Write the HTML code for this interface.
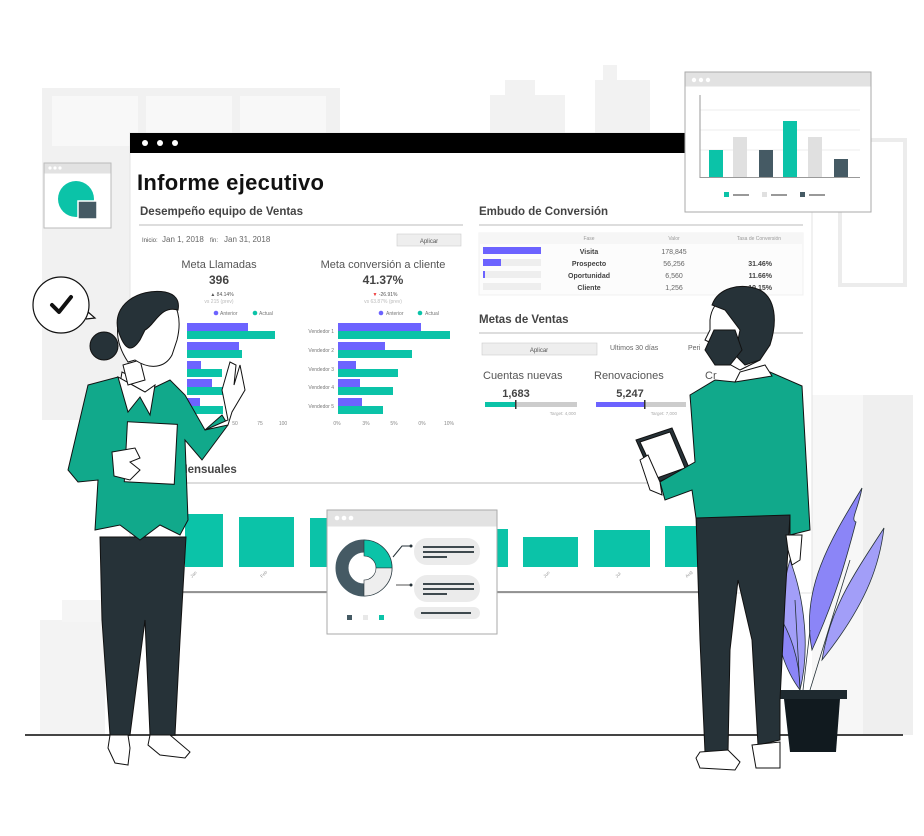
<!DOCTYPE html>
<html><head><meta charset="utf-8"><style>
html,body{margin:0;padding:0;background:#fff;width:924px;height:836px;overflow:hidden}
svg{display:block}
text{font-family:"Liberation Sans",sans-serif}
</style></head><body>
<svg width="924" height="836" viewBox="0 0 924 836" xmlns="http://www.w3.org/2000/svg">
<!-- background buildings -->
<rect x="42" y="88" width="298" height="332" fill="#f1f1f1"/>
<rect x="52" y="96" width="86" height="50" fill="#f8f8f8"/><rect x="146" y="96" width="86" height="50" fill="#f8f8f8"/><rect x="240" y="96" width="86" height="50" fill="#f8f8f8"/>
<rect x="490" y="95" width="75" height="40" fill="#f2f2f2"/><rect x="505" y="80" width="30" height="20" fill="#f2f2f2"/>
<rect x="595" y="80" width="55" height="55" fill="#f2f2f2"/><rect x="603" y="65" width="14" height="20" fill="#f2f2f2"/>
<rect x="840" y="140" width="65" height="145" fill="none" stroke="#ececec" stroke-width="4"/>
<rect x="812" y="395" width="51" height="340" fill="#f7f7f7"/>
<rect x="863" y="395" width="50" height="340" fill="#efefef"/>
<rect x="40" y="620" width="65" height="115" fill="#f3f3f3"/><rect x="62" y="600" width="50" height="22" fill="#f5f5f5"/>
<!-- main window -->
<rect x="130" y="133" width="682" height="460" fill="#fff" stroke="#e3e3e3"/>
<rect x="130" y="133" width="682" height="20" fill="#000"/>
<circle cx="145" cy="143" r="3" fill="#fff"/><circle cx="160" cy="143" r="3" fill="#fff"/><circle cx="175" cy="143" r="3" fill="#fff"/>
<text x="137" y="190" font-size="22" font-weight="bold" fill="#111" letter-spacing=".3">Informe ejecutivo</text>
<text x="140" y="215" font-size="11.5" font-weight="bold" fill="#444">Desempeño equipo de Ventas</text>
<line x1="139" y1="225" x2="463" y2="225" stroke="#bbb"/>
<text x="142" y="242" font-size="6" fill="#555">Inicio:</text><text x="162" y="242" font-size="8" fill="#666">Jan 1, 2018</text>
<text x="210" y="242" font-size="6" fill="#555">fin:</text><text x="224" y="242" font-size="8" fill="#666">Jan 31, 2018</text>
<rect x="397" y="234" width="64" height="12" fill="#eee" stroke="#ccc" stroke-width=".6"/><text x="429" y="243" font-size="6" fill="#555" text-anchor="middle">Aplicar</text>
<text x="219" y="268" font-size="11" fill="#555" text-anchor="middle">Meta Llamadas</text>
<text x="219" y="284" font-size="12" font-weight="bold" fill="#444" text-anchor="middle">396</text>
<text x="222" y="296" font-size="5" fill="#555" text-anchor="middle">▲ 84.14%</text><text x="219" y="303" font-size="5" fill="#bbb" text-anchor="middle">vs 215 (prev)</text>
<text x="383" y="268" font-size="11" fill="#555" text-anchor="middle">Meta conversión a cliente</text>
<text x="383" y="284" font-size="12" font-weight="bold" fill="#444" text-anchor="middle">41.37%</text>
<text x="385" y="296" font-size="5" fill="#555" text-anchor="middle"><tspan fill="#e33">▼</tspan> -26.91%</text><text x="383" y="303" font-size="5" fill="#bbb" text-anchor="middle">vs 63.87% (prev)</text>
<circle cx="216" cy="313" r="2.3" fill="#6c63ff"/><text x="220" y="315" font-size="5" fill="#777">Anterior</text>
<circle cx="255" cy="313" r="2.3" fill="#0bc3a8"/><text x="259" y="315" font-size="5" fill="#777">Actual</text>
<circle cx="381" cy="313" r="2.3" fill="#6c63ff"/><text x="386" y="315" font-size="5" fill="#777">Anterior</text>
<circle cx="420" cy="313" r="2.3" fill="#0bc3a8"/><text x="425" y="315" font-size="5" fill="#777">Actual</text>
<g fill="#6c63ff"><rect x="187" y="323" width="61" height="8"/><rect x="187" y="342" width="52" height="8"/><rect x="187" y="361" width="14" height="8"/><rect x="187" y="379" width="25" height="8"/><rect x="187" y="398" width="13" height="8"/>
<rect x="338" y="323" width="83" height="8"/><rect x="338" y="342" width="47" height="8"/><rect x="338" y="361" width="18" height="8"/><rect x="338" y="379" width="22" height="8"/><rect x="338" y="398" width="24" height="8"/></g>
<g fill="#0bc3a8"><rect x="187" y="331" width="88" height="8"/><rect x="187" y="350" width="55" height="8"/><rect x="187" y="369" width="35" height="8"/><rect x="187" y="387" width="40" height="8"/><rect x="187" y="406" width="36" height="8"/>
<rect x="338" y="331" width="112" height="8"/><rect x="338" y="350" width="74" height="8"/><rect x="338" y="369" width="60" height="8"/><rect x="338" y="387" width="55" height="8"/><rect x="338" y="406" width="45" height="8"/></g>
<g font-size="5" fill="#777" text-anchor="end"><text x="334" y="333">Vendedor 1</text><text x="334" y="352">Vendedor 2</text><text x="334" y="371">Vendedor 3</text><text x="334" y="389">Vendedor 4</text><text x="334" y="408">Vendedor 5</text></g>
<g font-size="5" fill="#888" text-anchor="middle"><text x="235" y="425">50</text><text x="260" y="425">75</text><text x="283" y="425">100</text>
<text x="337" y="425">0%</text><text x="366" y="425">3%</text><text x="394" y="425">5%</text><text x="422" y="425">0%</text><text x="449" y="425">10%</text></g>
<!-- right panel -->
<text x="479" y="215" font-size="11.5" font-weight="bold" fill="#444">Embudo de Conversión</text>
<line x1="479" y1="225" x2="803" y2="225" stroke="#bbb"/>
<rect x="479" y="233" width="324" height="62" fill="#fcfcfc" stroke="#f0f0f0"/>
<rect x="479" y="233" width="324" height="11" fill="#f6f6f6"/>
<g font-size="5" fill="#999" text-anchor="middle"><text x="589" y="240">Fase</text><text x="674" y="240">Valor</text><text x="759" y="240">Tasa de Conversión</text></g>
<g fill="#eee"><rect x="483" y="247" width="58" height="7"/><rect x="483" y="259" width="58" height="7"/><rect x="483" y="271" width="58" height="7"/><rect x="483" y="283" width="58" height="7"/></g>
<rect x="483" y="247" width="58" height="7" fill="#6c63ff"/><rect x="483" y="259" width="18" height="7" fill="#6c63ff"/><rect x="483" y="271" width="2" height="7" fill="#6c63ff"/>
<g font-size="7" fill="#444" font-weight="bold" text-anchor="middle"><text x="589" y="254">Visita</text><text x="589" y="266">Prospecto</text><text x="589" y="278">Oportunidad</text><text x="589" y="290">Cliente</text></g>
<g font-size="7" fill="#666" text-anchor="middle"><text x="674" y="254">178,845</text><text x="674" y="266">56,256</text><text x="674" y="278">6,560</text><text x="674" y="290">1,256</text></g>
<g font-size="7" fill="#444" font-weight="bold" text-anchor="end"><text x="772" y="266">31.46%</text><text x="772" y="278">11.66%</text><text x="772" y="290">19.15%</text></g>
<text x="479" y="323" font-size="11.5" font-weight="bold" fill="#444">Metas de Ventas</text>
<line x1="479" y1="333" x2="803" y2="333" stroke="#bbb"/>
<rect x="482" y="343" width="115" height="12" fill="#eee" stroke="#ccc" stroke-width=".6"/><text x="539" y="352" font-size="6" fill="#555" text-anchor="middle">Aplicar</text>
<text x="610" y="350" font-size="7" fill="#666">Ultimos 30 días</text><text x="688" y="350" font-size="7" fill="#666">Peri</text>
<text x="483" y="379" font-size="11" fill="#555">Cuentas nuevas</text><text x="594" y="379" font-size="11" fill="#555">Renovaciones</text><text x="705" y="379" font-size="11" fill="#555">Cr</text>
<text x="516" y="397" font-size="11" font-weight="bold" fill="#444" text-anchor="middle">1,683</text><text x="630" y="397" font-size="11" font-weight="bold" fill="#444" text-anchor="middle">5,247</text>
<rect x="485" y="402" width="92" height="5" fill="#ccc"/><rect x="485" y="402" width="31" height="5" fill="#0bc3a8"/><rect x="515" y="400" width="1.5" height="9" fill="#333"/>
<rect x="596" y="402" width="90" height="5" fill="#ccc"/><rect x="596" y="402" width="48" height="5" fill="#6c63ff"/><rect x="644" y="400" width="1.5" height="9" fill="#333"/>
<text x="576" y="415" font-size="4.5" fill="#aaa" text-anchor="end">Target: 4,000</text><text x="677" y="415" font-size="4.5" fill="#aaa" text-anchor="end">Target: 7,000</text>
<!-- monthly -->
<text x="178" y="473" font-size="11.5" font-weight="bold" fill="#444">Mensuales</text>
<line x1="175" y1="483" x2="700" y2="483" stroke="#bbb"/>
<g fill="#0bc3a8"><rect x="185" y="514" width="38" height="53"/><rect x="239" y="517" width="55" height="50"/><rect x="310" y="518" width="30" height="49"/><rect x="480" y="529" width="28" height="38"/><rect x="523" y="537" width="55" height="30"/><rect x="594" y="530" width="56" height="37"/><rect x="665" y="526" width="40" height="41"/></g>
<line x1="175" y1="592" x2="700" y2="592" stroke="#777" stroke-width="1.5"/>
<g font-size="4.5" fill="#999"><text transform="translate(192,578) rotate(-45)">Jan</text><text transform="translate(262,578) rotate(-45)">Feb</text><text transform="translate(545,578) rotate(-45)">Jun</text><text transform="translate(617,578) rotate(-45)">Jul</text><text transform="translate(687,578) rotate(-45)">Aug</text></g>
<!-- small window center -->
<rect x="327" y="510" width="170" height="124" fill="#fff" stroke="#aaa"/>
<rect x="327.5" y="510.5" width="169" height="16" fill="#e2e2e2"/>
<circle cx="337" cy="518" r="2.3" fill="#fff"/><circle cx="344" cy="518" r="2.3" fill="#fff"/><circle cx="351" cy="518" r="2.3" fill="#fff"/>
<circle cx="364" cy="568" r="22" fill="none" stroke="#455a64" stroke-width="13"/>
<path d="M364 540 A28 28 0 0 1 392 568 L376 568 A12 12 0 0 0 364 556 Z" fill="#0bc3a8" stroke="#263238" stroke-width=".6"/>
<path d="M392 568 A28 28 0 0 1 364 596 L364 580 A12 12 0 0 0 376 568 Z" fill="#eee" stroke="#263238" stroke-width=".6"/>
<path d="M393 557 L402 546 L411 546" stroke="#263238" fill="none"/><circle cx="411" cy="546" r="1.5" fill="#263238"/>
<path d="M396 585 L411 585" stroke="#555" fill="none"/><circle cx="411" cy="585" r="1.5" fill="#263238"/>
<rect x="414" y="538" width="66" height="27" rx="13" fill="#ebebeb"/><rect x="414" y="575" width="66" height="27" rx="13" fill="#ebebeb"/><rect x="414" y="607" width="66" height="12" rx="6" fill="#ebebeb"/>
<g stroke="#263238" stroke-width="1.8"><line x1="423" y1="547" x2="474" y2="547"/><line x1="423" y1="552" x2="474" y2="552"/><line x1="423" y1="557" x2="447" y2="557"/><line x1="423" y1="584" x2="474" y2="584"/><line x1="423" y1="589" x2="474" y2="589"/><line x1="423" y1="594" x2="447" y2="594"/><line x1="421" y1="613" x2="471" y2="613"/></g>
<rect x="347" y="615" width="5" height="5" fill="#455a64"/><rect x="363" y="615" width="5" height="5" fill="#e8e8e8"/><rect x="379" y="615" width="5" height="5" fill="#0bc3a8"/>
<!-- top right window -->
<rect x="685" y="72" width="186" height="140" fill="#fff" stroke="#aaa"/>
<rect x="685.5" y="72.5" width="185" height="14" fill="#e2e2e2"/>
<circle cx="694" cy="80" r="2.2" fill="#fff"/><circle cx="701" cy="80" r="2.2" fill="#fff"/><circle cx="708" cy="80" r="2.2" fill="#fff"/>
<g stroke="#eee"><line x1="700" y1="110" x2="860" y2="110"/><line x1="700" y1="130" x2="860" y2="130"/><line x1="700" y1="150" x2="860" y2="150"/></g>
<line x1="700" y1="95" x2="700" y2="178" stroke="#999"/><line x1="700" y1="177.5" x2="860" y2="177.5" stroke="#999"/>
<rect x="709" y="150" width="14" height="27" fill="#0bc3a8"/><rect x="733" y="137" width="14" height="40" fill="#e0e0e0"/><rect x="759" y="150" width="14" height="27" fill="#455a64"/><rect x="783" y="121" width="14" height="56" fill="#0bc3a8"/><rect x="808" y="137" width="14" height="40" fill="#e0e0e0"/><rect x="834" y="159" width="14" height="18" fill="#455a64"/>
<rect x="724" y="192" width="5" height="5" fill="#0bc3a8"/><line x1="733" y1="195" x2="749" y2="195" stroke="#333"/>
<rect x="762" y="192" width="5" height="5" fill="#e0e0e0"/><line x1="771" y1="195" x2="787" y2="195" stroke="#333"/>
<rect x="800" y="192" width="5" height="5" fill="#455a64"/><line x1="809" y1="195" x2="825" y2="195" stroke="#333"/>
<!-- left small window -->
<rect x="44" y="163" width="67" height="65" fill="#fff" stroke="#bbb"/>
<rect x="44.5" y="163.5" width="66" height="10" fill="#e2e2e2"/>
<circle cx="50" cy="168" r="1.6" fill="#fff"/><circle cx="55" cy="168" r="1.6" fill="#fff"/><circle cx="60" cy="168" r="1.6" fill="#fff"/>
<circle cx="76" cy="199" r="18" fill="#0bc3a8"/>
<rect x="78" y="201" width="19" height="18" fill="#455a64" stroke="#fff" stroke-width="1.5"/>
<!-- check bubble -->
<path d="M88 312 L95 318 L86 319" fill="#fff" stroke="#111" stroke-width="1.2"/>
<circle cx="61" cy="305" r="28" fill="#fff" stroke="#111" stroke-width="1.2"/>
<path d="M52 305 L59 312 L71 297" fill="none" stroke="#111" stroke-width="4" stroke-linecap="round" stroke-linejoin="round"/>
<!-- floor -->
<line x1="25" y1="735" x2="903" y2="735" stroke="#444" stroke-width="2"/>
<!-- plant -->
<g stroke="#263238" stroke-width=".8">
<path d="M812 650 C800 590 830 540 862 488 C858 510 850 520 856 522 C846 560 835 600 812 650Z" fill="#8b85f7"/>
<path d="M822 660 C830 610 850 580 884 528 C880 560 870 600 822 660Z" fill="#a29ef8"/>
<path d="M800 690 C780 650 778 600 790 560 C805 600 810 650 800 690Z" fill="#a29ef8"/>
<path d="M800 690 C785 670 775 640 775 610 C790 630 800 660 800 690Z" fill="#8b85f7"/>
<path d="M803 690 L810 630 M810 690 L850 560 M800 690 L795 600"/>
</g>
<rect x="777" y="690" width="70" height="9" fill="#1f2a30"/>
<path d="M784 699 L840 699 L836 752 L790 752Z" fill="#111a1f"/>
<!-- woman -->
<g stroke="#111" stroke-width="1">
<path d="M100 537 L186 537 L180 640 L175 735 L150 735 L145 620 L130 735 L110 735 L102 620Z" fill="#263238"/>
<path d="M110 735 L128 735 L130 748 L128 765 L115 763 L108 748Z" fill="#fff"/>
<path d="M150 735 L170 735 L190 752 L185 758 L160 755 L148 745Z" fill="#fff"/>
<path d="M138 380 L120 384 L122 372 Z" fill="#fff"/>
<path d="M88 385 L118 377 L145 392 L170 380 L185 395 L205 430 L222 415 L228 425 L202 460 L185 440 L188 520 L180 535 L160 525 L140 540 L120 525 L95 530 L98 480 L78 482 L68 470 Z" fill="#11a98b"/>
<path d="M118 377 L128 412 L140 397 L150 415 L155 385 L145 392Z" fill="#fff"/>
<rect x="126" y="423" width="50" height="60" fill="#fff" transform="rotate(3 150 450)"/>
<path d="M112 452 L135 448 L140 458 L130 462 L140 470 L130 480 L114 476Z" fill="#fff"/>
<path d="M205 430 L228 420 L222 390 L230 362 L236 365 L234 385 L240 365 L245 390 L232 412 L228 425Z" fill="#fff"/>
<path d="M123 365 L140 360 L145 380 L128 385Z" fill="#fff"/>
<path d="M118 325 C120 300 145 290 165 296 C178 302 182 320 177 340 L172 355 C165 368 150 370 135 360 L128 362 C120 350 116 338 118 325Z" fill="#fff"/>
<path d="M118 330 C112 305 138 288 165 292 C175 294 180 300 178 310 C160 305 155 325 145 330 L140 340 C132 352 125 352 118 330Z" fill="#263238"/>
<circle cx="104" cy="346" r="14" fill="#263238"/>
</g>
<!-- man -->
<g stroke="#111" stroke-width="1">
<path d="M696 515 L790 515 L785 600 L780 700 L780 740 L758 745 L752 640 L738 580 L730 650 L728 752 L705 752 L700 640Z" fill="#263238"/>
<path d="M700 752 L728 750 L740 762 L735 770 L700 768 L696 758Z" fill="#fff"/>
<path d="M752 745 L780 742 L780 768 L756 768Z" fill="#fff"/>
<path d="M786 535 L802 535 L800 560 L792 565 L788 550Z" fill="#fff"/>
<path d="M636 440 L672 428 L690 470 L655 483Z" fill="#263238"/>
<path d="M640 442 L670 432 L685 468 L657 478Z" fill="#fff"/>
<path d="M690 395 L715 380 L735 382 L770 372 L802 386 L810 530 L790 535 L790 515 L696 518 L692 490 L665 500 L660 482 L695 462Z" fill="#11a98b"/>
<path d="M735 382 L740 372 L765 365 L772 376Z" fill="#fff"/>
<path d="M640 460 L648 455 L660 482 L662 495 L650 490Z" fill="#fff"/>
<path d="M710 320 C712 298 735 288 755 292 L765 330 L760 360 L740 370 L722 360 L715 345 L705 340 L710 330Z" fill="#fff"/>
<path d="M712 305 C718 288 740 282 760 290 C775 298 778 320 770 345 L760 360 L745 365 L735 355 L740 330 L725 310 Z" fill="#263238"/>
<path d="M714 330 L735 330 L742 350 L730 365 L715 365 L705 350Z" fill="#263238"/>
</g>
</svg>
</body></html>
